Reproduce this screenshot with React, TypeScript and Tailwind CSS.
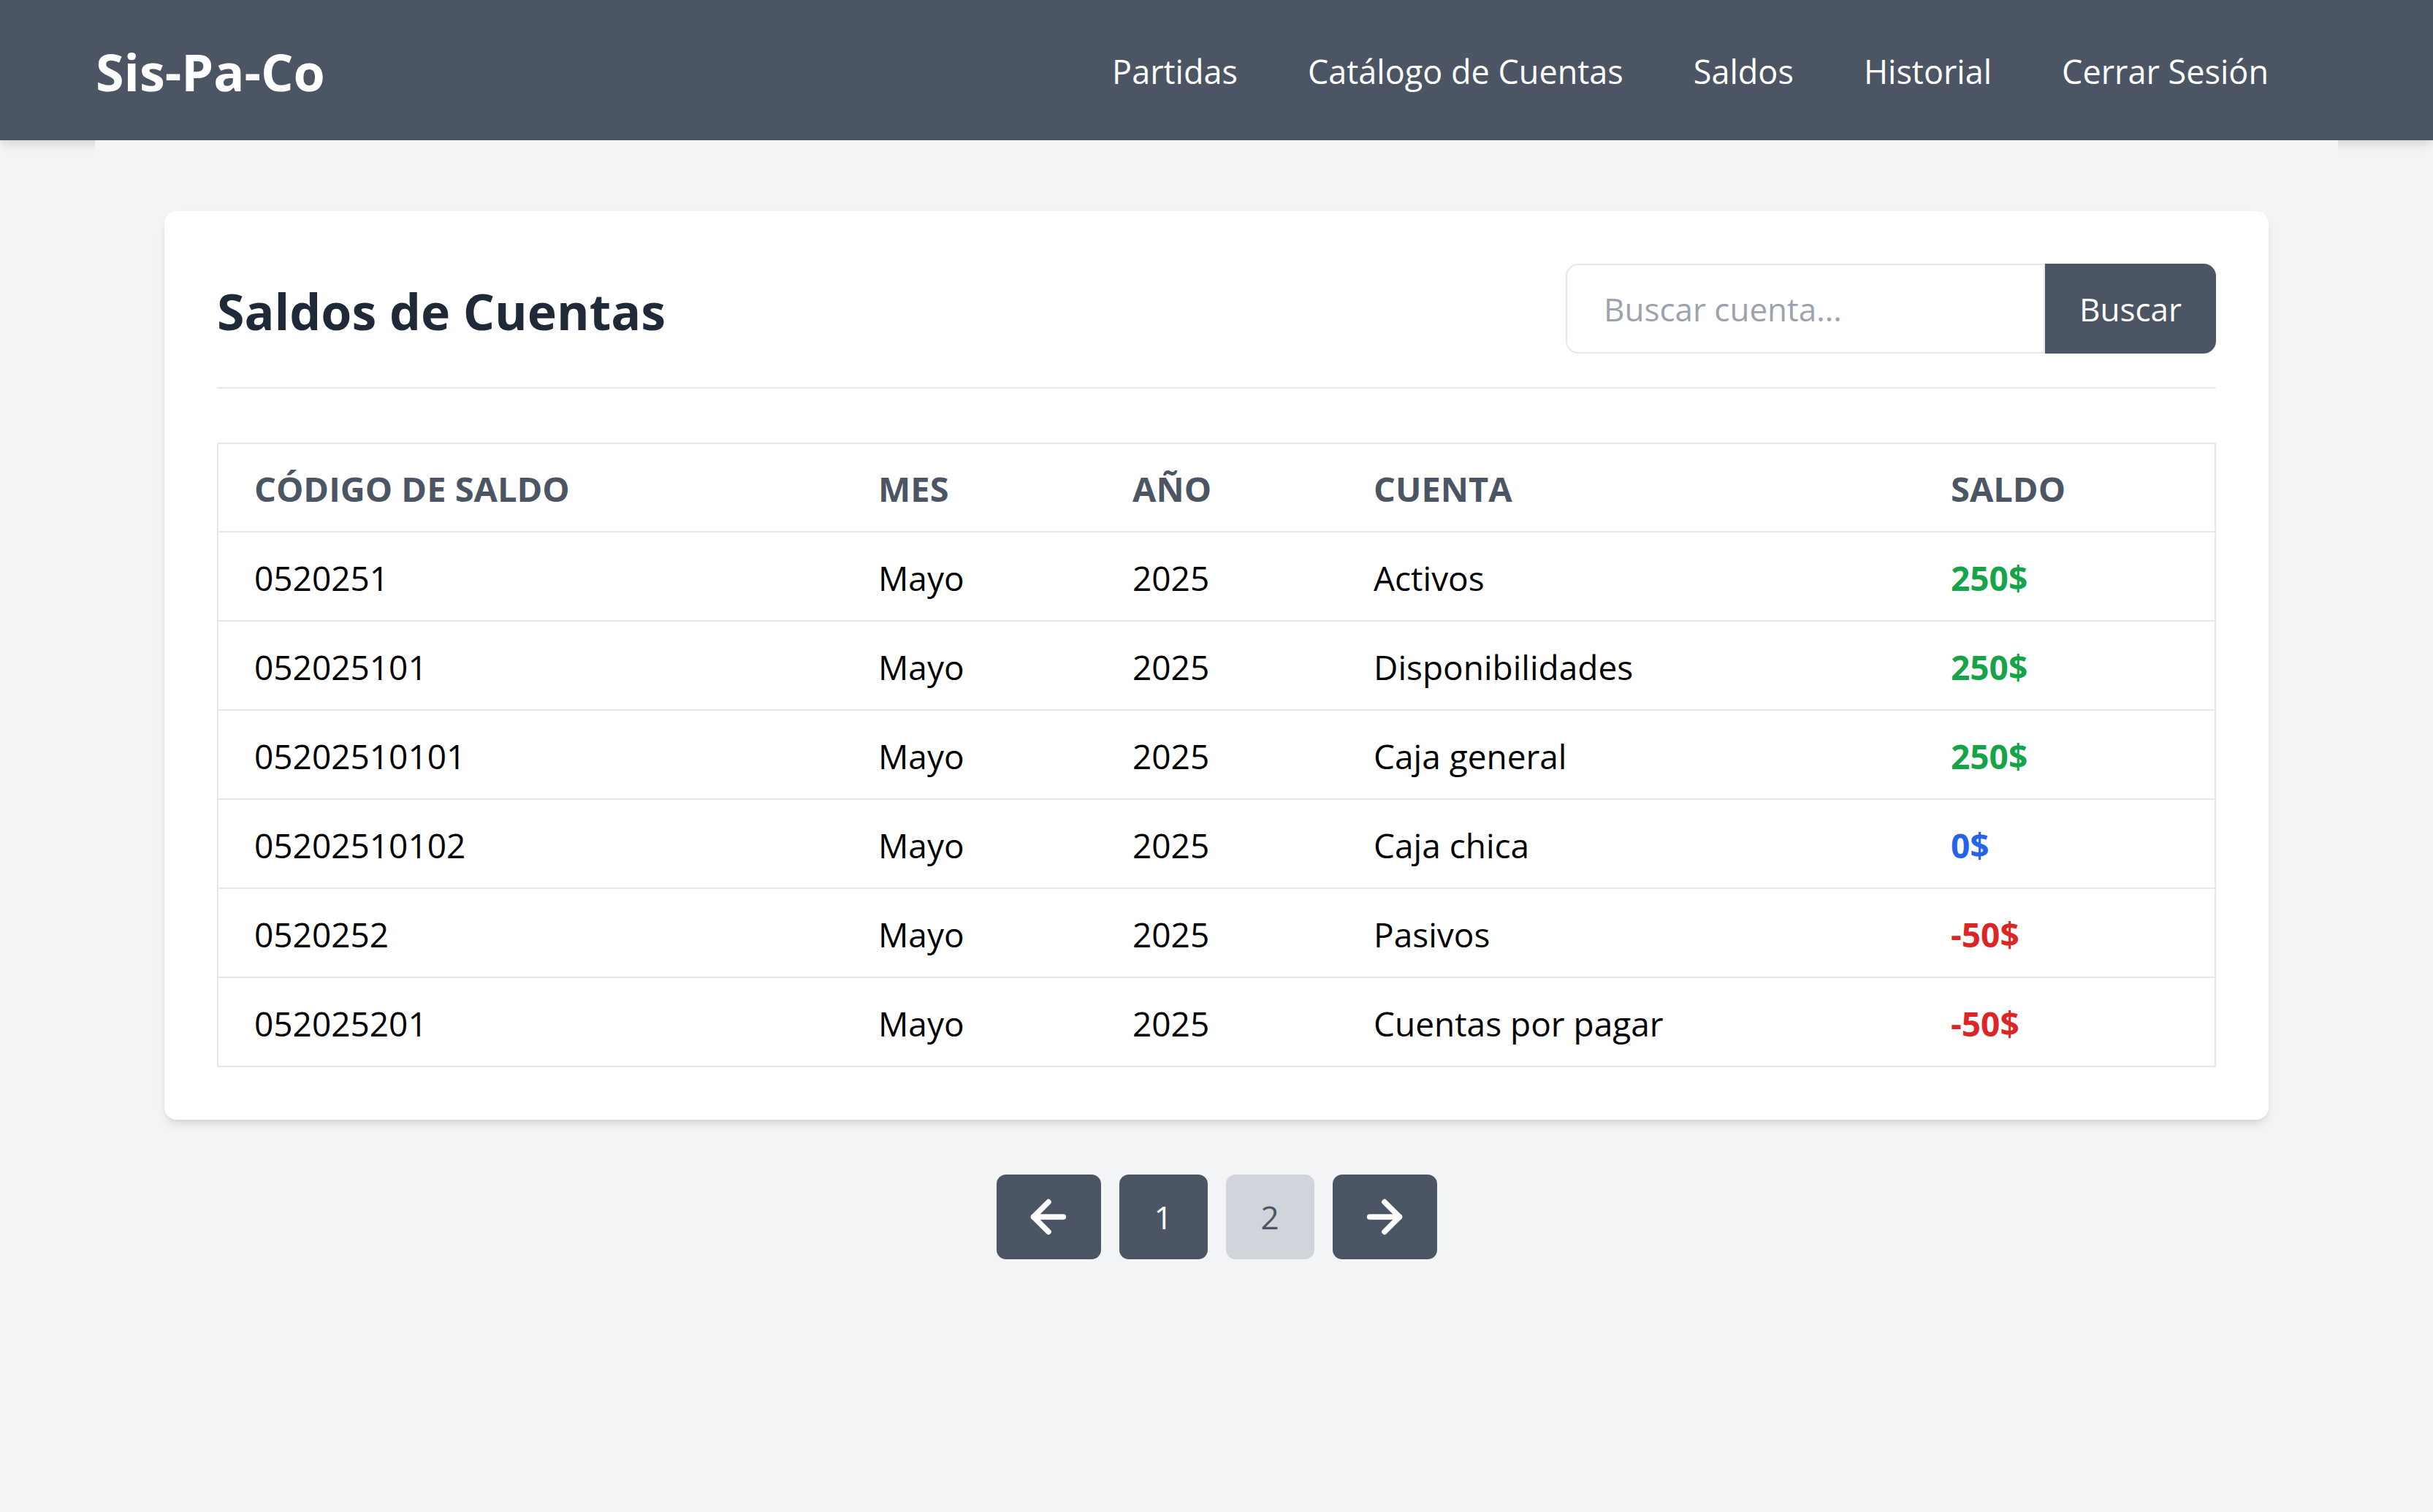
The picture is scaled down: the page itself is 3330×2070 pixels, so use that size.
import { ArrowLeft, ArrowRight } from "lucide-react";

type Saldo = {
  codigo: string;
  mes: string;
  anio: string;
  cuenta: string;
  saldo: number;
};

const saldos: Saldo[] = [
  { codigo: "0520251", mes: "Mayo", anio: "2025", cuenta: "Activos", saldo: 250 },
  { codigo: "052025101", mes: "Mayo", anio: "2025", cuenta: "Disponibilidades", saldo: 250 },
  { codigo: "05202510101", mes: "Mayo", anio: "2025", cuenta: "Caja general", saldo: 250 },
  { codigo: "05202510102", mes: "Mayo", anio: "2025", cuenta: "Caja chica", saldo: 0 },
  { codigo: "0520252", mes: "Mayo", anio: "2025", cuenta: "Pasivos", saldo: -50 },
  { codigo: "052025201", mes: "Mayo", anio: "2025", cuenta: "Cuentas por pagar", saldo: -50 },
];

const links = ["Partidas", "Catálogo de Cuentas", "Saldos", "Historial", "Cerrar Sesión"];

function saldoColor(n: number) {
  if (n > 0) return "text-[#16a34a]";
  if (n < 0) return "text-[#dc2626]";
  return "text-[#2563eb]";
}

function Navbar() {
  return (
    <nav className="flex h-[192px] items-center justify-between bg-[#4b5563] pl-[131px] pr-[225px] shadow-[0_8px_13px_-2px_rgba(0,0,0,0.12)]">
      <span className="mt-[4px] text-[70px] font-bold text-white">Sis-Pa-Co</span>
      <div className="mt-[4px] flex items-center gap-[96px]">
        {links.map((l) => (
          <a key={l} href="#" className="text-[45px] text-white">
            {l}
          </a>
        ))}
      </div>
    </nav>
  );
}

export default function App() {
  return (
    <div className="min-h-[2070px] bg-[#f3f4f6] font-['Open_Sans',sans-serif]">
      <Navbar />

      <main className="mx-[130px] bg-[#f3f4f6] px-[95px] pt-[97px]">
        {/* Card */}
        <section className="rounded-[17px] bg-white p-[72px] shadow-[0_8px_16px_-3px_rgba(0,0,0,0.1),0_4px_8px_-4px_rgba(0,0,0,0.1)]">
          <div className="flex items-center justify-between border-b-2 border-[#e5e7eb] pb-[46px]">
            <h2 className="mt-[6px] text-[68px] font-bold text-[#1f2937]">Saldos de Cuentas</h2>
            <div className="flex">
              <input
                type="text"
                placeholder="Buscar cuenta..."
                className="h-[123px] w-[656px] rounded-l-[17px] border-2 border-[#e5e7eb] px-[50px] text-[44px] outline-none placeholder:text-[#9ca3af]"
              />
              <button className="h-[123px] w-[234px] rounded-r-[17px] bg-[#4b5563] text-[44px] text-white">
                Buscar
              </button>
            </div>
          </div>

          <table className="mt-[74px] w-full table-fixed border-collapse border-2 border-[#e5e7eb] text-left">
            <colgroup>
              <col className="w-[855px]" />
              <col className="w-[348px]" />
              <col className="w-[330px]" />
              <col className="w-[790px]" />
              <col />
            </colgroup>
            <thead>
              <tr className="h-[121px] border-b-2 border-[#e5e7eb]">
                {["Código de Saldo", "Mes", "Año", "Cuenta", "Saldo"].map((h) => (
                  <th key={h} className="px-[49px] pt-[4px] text-[47px] font-bold uppercase text-[#4b5563]">
                    {h}
                  </th>
                ))}
              </tr>
            </thead>
            <tbody>
              {saldos.map((s) => (
                <tr key={s.codigo} className="h-[122px] border-b-2 border-[#e5e7eb] text-[46px] text-black">
                  <td className="px-[49px] pt-[4px]">{s.codigo}</td>
                  <td className="px-[49px] pt-[4px]">{s.mes}</td>
                  <td className="px-[49px] pt-[4px]">{s.anio}</td>
                  <td className="px-[49px] pt-[4px]">{s.cuenta}</td>
                  <td className={`px-[49px] pt-[4px] font-bold ${saldoColor(s.saldo)}`}>{s.saldo}$</td>
                </tr>
              ))}
            </tbody>
          </table>
        </section>

        {/* Pagination */}
        <div className="mt-[75px] flex justify-center gap-[25px]">
          <button className="flex h-[116px] w-[143px] items-center justify-center rounded-[13px] bg-[#4b5563] text-white">
            <ArrowLeft size={70} strokeWidth={2.6} />
          </button>
          <button className="flex h-[116px] w-[121px] items-center justify-center rounded-[13px] bg-[#4b5563] text-[44px] text-white">
            1
          </button>
          <button className="flex h-[116px] w-[121px] items-center justify-center rounded-[13px] bg-[#d1d5db] text-[44px] text-[#4b5563]">
            2
          </button>
          <button className="flex h-[116px] w-[143px] items-center justify-center rounded-[13px] bg-[#4b5563] text-white">
            <ArrowRight size={70} strokeWidth={2.6} />
          </button>
        </div>
      </main>
    </div>
  );
}
